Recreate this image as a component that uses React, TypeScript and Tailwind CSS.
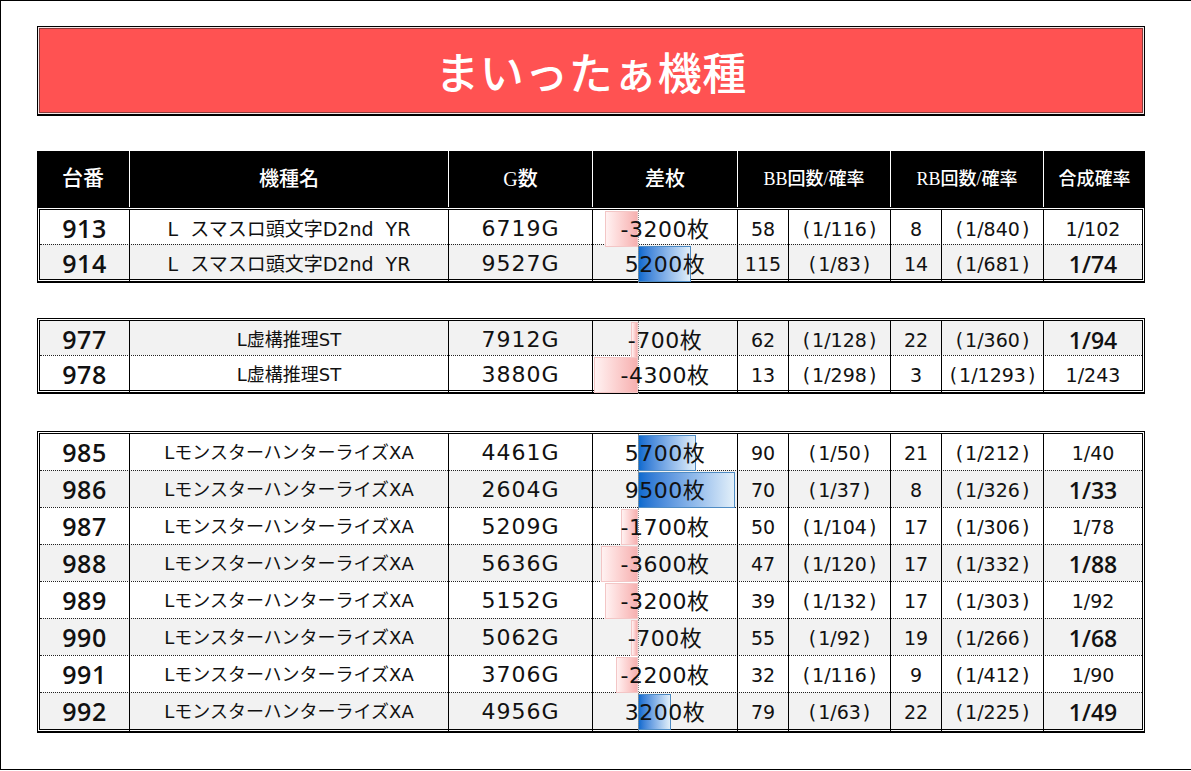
import React from "react";

type Row = {
  no: string;
  name: string;
  g: string;
  diff: number;
  bb: string;
  bbp: string;
  rb: string;
  rbp: string;
  tot: string;
  gray: boolean;
};

type Group = { tall: boolean; rows: Row[] };

const N1 = "L  スマスロ頭文字D2nd  YR";
const N2 = "L虚構推理ST";
const N3 = "LモンスターハンターライズXA";

const groups: Group[] = [
  {
    tall: false,
    rows: [
      { no: "913", name: N1, g: "6719G", diff: -3200, bb: "58", bbp: "1/116", rb: "8", rbp: "1/840", tot: "1/102", gray: false },
      { no: "914", name: N1, g: "9527G", diff: 5200, bb: "115", bbp: "1/83", rb: "14", rbp: "1/681", tot: "1/74", gray: true },
    ],
  },
  {
    tall: false,
    rows: [
      { no: "977", name: N2, g: "7912G", diff: -700, bb: "62", bbp: "1/128", rb: "22", rbp: "1/360", tot: "1/94", gray: true },
      { no: "978", name: N2, g: "3880G", diff: -4300, bb: "13", bbp: "1/298", rb: "3", rbp: "1/1293", tot: "1/243", gray: false },
    ],
  },
  {
    tall: true,
    rows: [
      { no: "985", name: N3, g: "4461G", diff: 5700, bb: "90", bbp: "1/50", rb: "21", rbp: "1/212", tot: "1/40", gray: false },
      { no: "986", name: N3, g: "2604G", diff: 9500, bb: "70", bbp: "1/37", rb: "8", rbp: "1/326", tot: "1/33", gray: true },
      { no: "987", name: N3, g: "5209G", diff: -1700, bb: "50", bbp: "1/104", rb: "17", rbp: "1/306", tot: "1/78", gray: false },
      { no: "988", name: N3, g: "5636G", diff: -3600, bb: "47", bbp: "1/120", rb: "17", rbp: "1/332", tot: "1/88", gray: true },
      { no: "989", name: N3, g: "5152G", diff: -3200, bb: "39", bbp: "1/132", rb: "17", rbp: "1/303", tot: "1/92", gray: false },
      { no: "990", name: N3, g: "5062G", diff: -700, bb: "55", bbp: "1/92", rb: "19", rbp: "1/266", tot: "1/68", gray: true },
      { no: "991", name: N3, g: "3706G", diff: -2200, bb: "32", bbp: "1/116", rb: "9", rbp: "1/412", tot: "1/90", gray: false },
      { no: "992", name: N3, g: "4956G", diff: 3200, bb: "79", bbp: "1/63", rb: "22", rbp: "1/225", tot: "1/49", gray: true },
    ],
  },
];

const SCALE = 0.0102;

function Prob({ v }: { v: string }) {
  return (
    <span className="whitespace-nowrap">
      <span>(</span>
      <span className="mx-[2px]">{v}</span>
      <span>)</span>
    </span>
  );
}

function DiffCell({ v }: { v: number }) {
  const w = Math.round(Math.abs(v) * SCALE);
  return (
    <div className="relative h-full border-l border-black flex items-center justify-center">
      {v < 0 ? (
        <div
          className="absolute top-[1px] bottom-[1px] border border-[#f3c6c6] bg-gradient-to-l from-[#f6b0b0] to-[#fff2f2]"
          style={{ left: 45 - w, width: w }}
        />
      ) : (
        <div
          className="absolute top-[1px] bottom-[1px] left-[45px] border border-[#4f8cc4] bg-gradient-to-r from-[#0a6bcf] to-[#e2eff9]"
          style={{ width: w }}
        />
      )}
      <div className="absolute top-0 bottom-0 left-[45px] border-l border-dotted border-[#8a8a8a]" />
      <span className="relative text-[22px] tracking-[0.5px] text-[#111]">
        {v}
        <span className="font-['Noto_Sans_CJK_JP'] text-[22px]">枚</span>
      </span>
    </div>
  );
}

function DataRow({ r, first, tall }: { r: Row; first: boolean; tall: boolean }) {
  const h = tall ? (first ? "h-[36px]" : "h-[37px]") : first ? "h-[34px]" : "h-[35px]";
  return (
    <div
      className={`grid grid-cols-[89px_319px_144px_145px_51px_102px_51px_102px_99px] items-stretch text-[#111] ${h} ${
        first ? "" : "border-t border-dotted border-[#222]"
      } ${r.gray ? "bg-[#f2f2f2]" : "bg-white"}`}
    >
      <div className="flex items-center justify-center font-['Open_Sans'] font-semibold text-[25px] tracking-[0.5px]">
        {r.no}
      </div>
      <div
        className={`flex items-center justify-center border-l border-black whitespace-pre ${
          r.name === N1 ? "text-[19px]" : "text-[18px]"
        }`}
      >
        {r.name}
      </div>
      <div className="flex items-center justify-center border-l border-black text-[22px] tracking-[1px]">
        {r.g}
      </div>
      <DiffCell v={r.diff} />
      <div className="flex items-center justify-center border-l border-black text-[19px]">{r.bb}</div>
      <div className="flex items-center justify-center border-l border-black text-[19px]">
        <Prob v={r.bbp} />
      </div>
      <div className="flex items-center justify-center border-l border-black text-[19px]">{r.rb}</div>
      <div className="flex items-center justify-center border-l border-black text-[19px]">
        <Prob v={r.rbp} />
      </div>
      <div
        className={`flex items-center justify-center border-l border-black ${
          r.gray ? "font-['Open_Sans'] text-[23px] font-semibold" : "text-[19px]"
        }`}
      >
        {r.tot}
      </div>
    </div>
  );
}

function GroupBox({ g, className }: { g: Group; className: string }) {
  return (
    <div className={`w-[1108px] border border-black border-b-2 p-px bg-white ${className}`}>
      <div className="border border-black">
        {g.rows.map((r, i) => (
          <DataRow key={r.no} r={r} first={i === 0} tall={g.tall} />
        ))}
      </div>
    </div>
  );
}

export default function App() {
  const hdr = "flex items-center justify-center border-l border-white";
  return (
    <div className="w-[1191px] h-[771px] bg-white overflow-hidden font-['DejaVu_Sans','Noto_Sans_CJK_JP',sans-serif]">
      <div className="h-[770px] border-l border-t border-b border-black pl-[36px] pt-[25px]">
        <div className="w-[1108px] h-[90px] border border-black border-b-2 p-px bg-[#f6e6e6]">
          <div className="h-full border border-[#8a3b3b] bg-[#ff5252] flex items-center justify-center">
            <span className="text-white text-[44px] font-medium font-['Noto_Sans_CJK_JP',sans-serif] leading-none tracking-[0.5px]">
              まいったぁ機種
            </span>
          </div>
        </div>

        <div className="mt-[35px] w-[1108px] h-[56px] bg-black text-white grid grid-cols-[92px_319px_144px_145px_153px_153px_102px] font-['Liberation_Serif','Noto_Sans_CJK_JP',serif] font-medium">
          <div className="flex items-center justify-center text-[21px]">台番</div>
          <div className={`${hdr} text-[20px]`}>機種名</div>
          <div className={`${hdr} text-[20px]`}>G数</div>
          <div className={`${hdr} text-[20px]`}>差枚</div>
          <div className={`${hdr} text-[18px]`}>BB回数/確率</div>
          <div className={`${hdr} text-[18px]`}>RB回数/確率</div>
          <div className={`${hdr} text-[18px]`}>合成確率</div>
        </div>

        <GroupBox g={groups[0]} className="" />
        <GroupBox g={groups[1]} className="mt-[35px]" />
        <GroupBox g={groups[2]} className="mt-[37px]" />
      </div>
    </div>
  );
}
